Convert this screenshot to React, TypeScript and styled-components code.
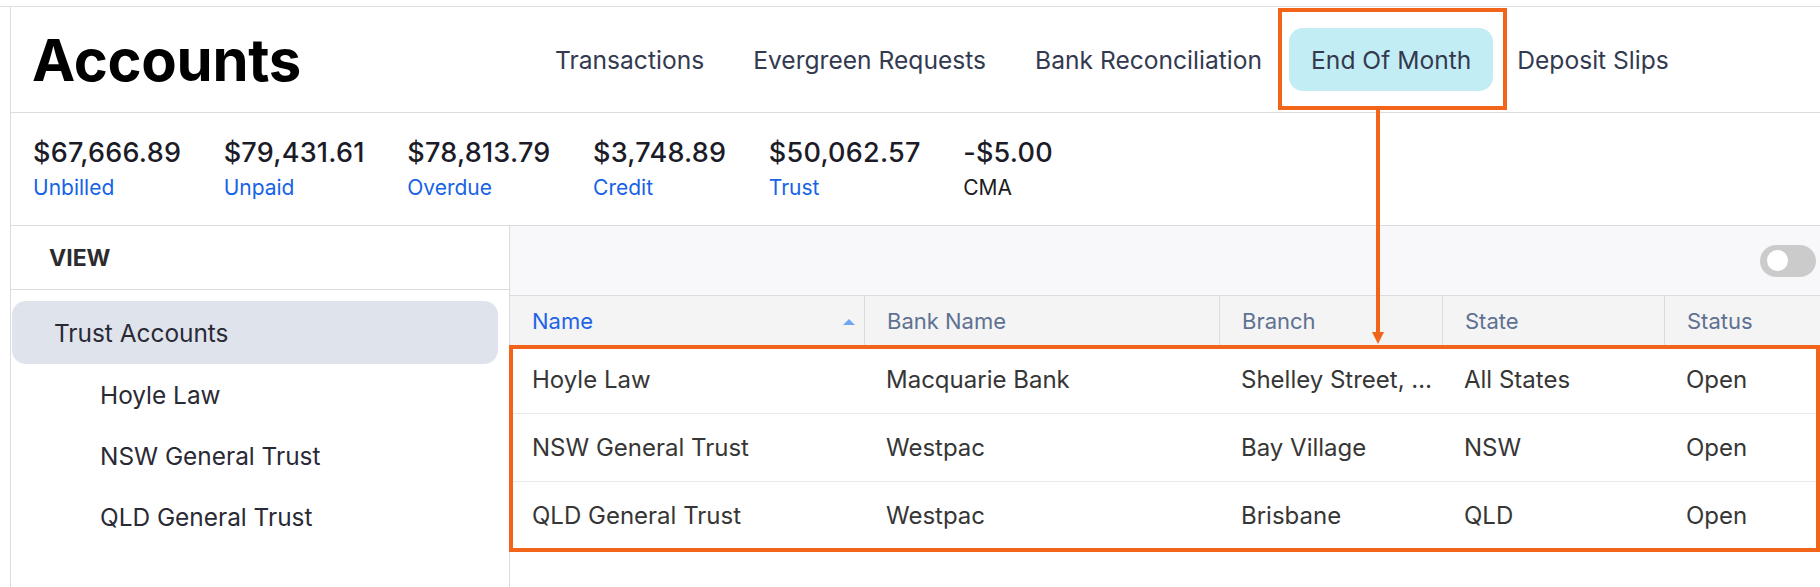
import styled, { createGlobalStyle } from "styled-components";

const GlobalStyle = createGlobalStyle`
  html, body {
    margin: 0;
    padding: 0;
    background: #ffffff;
    font-family: Inter, "Noto Sans", "Liberation Sans", sans-serif;
    overflow: hidden;
  }
  * {
    box-sizing: border-box;
  }
`;

const ORANGE = "#f2641a";

const tabs = ["Transactions", "Evergreen Requests", "Bank Reconciliation", "End Of Month", "Deposit Slips"];

const stats = [
  { amount: "$67,666.89", label: "Unbilled", link: true },
  { amount: "$79,431.61", label: "Unpaid", link: true },
  { amount: "$78,813.79", label: "Overdue", link: true },
  { amount: "$3,748.89", label: "Credit", link: true },
  { amount: "$50,062.57", label: "Trust", link: true },
  { amount: "-$5.00", label: "CMA", link: false },
];

const columns = [
  { key: "name", title: "Name", width: "354px" },
  { key: "bank", title: "Bank Name", width: "355px" },
  { key: "branch", title: "Branch", width: "223px" },
  { key: "state", title: "State", width: "222px" },
  { key: "status", title: "Status", width: "1fr" },
];

const rows = [
  { name: "Hoyle Law", bank: "Macquarie Bank", branch: "Shelley Street, Sydney", state: "All States", status: "Open" },
  { name: "NSW General Trust", bank: "Westpac", branch: "Bay Village", state: "NSW", status: "Open" },
  { name: "QLD General Trust", bank: "Westpac", branch: "Brisbane", state: "QLD", status: "Open" },
];

const gridColumns = columns.map((c) => c.width).join(" ");

export default function App() {
  return (
    <>
      <GlobalStyle />
      <Shell>
        <Frame>
          <Header>
            <Title>Accounts</Title>
            <Tabs>
              {tabs.map((tab) =>
                tab === "End Of Month" ? (
                  <Highlight key={tab}>
                    <Tab $active>{tab}</Tab>
                    <Arrow width="12" height="234" viewBox="0 0 12 234">
                      <line x1="6" y1="0" x2="6" y2="224" stroke={ORANGE} strokeWidth="4" />
                      <polygon points="0,222 12,222 6,234" fill={ORANGE} />
                    </Arrow>
                  </Highlight>
                ) : (
                  <Tab key={tab}>{tab}</Tab>
                )
              )}
            </Tabs>
          </Header>

          <Stats>
            {stats.map((s) => (
              <Stat key={s.label}>
                <Amount>{s.amount}</Amount>
                <StatLabel $link={s.link}>{s.label}</StatLabel>
              </Stat>
            ))}
          </Stats>

          <Main>
            <Sidebar>
              <SidebarHeader>VIEW</SidebarHeader>
              <NavList>
                <NavItem $active>Trust Accounts</NavItem>
                <NavItem $child>Hoyle Law</NavItem>
                <NavItem $child>NSW General Trust</NavItem>
                <NavItem $child>QLD General Trust</NavItem>
              </NavList>
            </Sidebar>

            <Panel>
              <Toolbar>
                <Toggle>
                  <Knob />
                </Toggle>
              </Toolbar>
              <HeadRow>
                {columns.map((c, i) => (
                  <HeadCell key={c.key} $first={i === 0} $sorted={c.key === "name"}>
                    {c.title}
                    {c.key === "name" && <SortUp />}
                  </HeadCell>
                ))}
              </HeadRow>
              <Body>
                {rows.map((r) => (
                  <Row key={r.name}>
                    {columns.map((c) => (
                      <Cell key={c.key}>{r[c.key as keyof typeof r]}</Cell>
                    ))}
                  </Row>
                ))}
                <BodyOutline />
              </Body>
            </Panel>
          </Main>
        </Frame>
      </Shell>
    </>
  );
}

const Shell = styled.div`
  width: 1820px;
  height: 587px;
  padding-top: 6px;
  overflow: hidden;
`;

const Frame = styled.div`
  border-top: 1px solid #dfe0e6;
  height: 100%;
  padding-left: 10px;
  & > * {
    border-left: 1px solid #dcdcdf;
  }
`;

const Header = styled.header`
  display: grid;
  grid-template-columns: 499px 1fr;
  align-items: center;
  height: 106px;
  border-bottom: 1px solid #dcdcdf;
`;

const Title = styled.h1`
  margin: 0;
  padding-left: 21px;
  font-size: 58px;
  line-height: 68px;
  font-weight: 700;
  color: #000000;
  letter-spacing: -0.3px;
`;

const Tabs = styled.nav`
  display: flex;
  align-items: center;
  gap: 5px;
  padding-left: 23px;
`;

const Tab = styled.div<{ $active?: boolean }>`
  display: flex;
  align-items: center;
  height: 63px;
  padding: 0 22px;
  border-radius: 14px;
  font-size: 24.6px;
  color: #333a4f;
  white-space: nowrap;
  background: ${({ $active }) => ($active ? "#c3edf4" : "transparent")};
`;

const Highlight = styled.div`
  position: relative;
  z-index: 10;
  margin-right: -3px;

  &::before {
    content: "";
    position: absolute;
    inset: -20px -14px -19px -11px;
    border: 4px solid ${ORANGE};
    pointer-events: none;
  }
`;

const Arrow = styled.svg`
  position: absolute;
  left: 83px;
  top: 82px;
  display: block;
`;

const Stats = styled.section`
  display: flex;
  gap: 42.5px;
  height: 113px;
  padding: 23px 0 0 22px;
  border-bottom: 1px solid #dcdcdf;
`;

const Stat = styled.div`
  display: flex;
  flex-direction: column;
`;

const Amount = styled.span`
  font-size: 27px;
  line-height: 33px;
  font-weight: 500;
  letter-spacing: 0.25px;
  color: #1c1c28;
`;

const StatLabel = styled.span<{ $link: boolean }>`
  margin-top: 6px;
  font-size: 21px;
  line-height: 25px;
  color: ${({ $link }) => ($link ? "#1763e6" : "#1c1c22")};
`;

const Main = styled.div`
  display: flex;
  height: 400px;
`;

const Sidebar = styled.aside`
  width: 499px;
  flex-shrink: 0;
  border-right: 1px solid #dcdcdf;
`;

const SidebarHeader = styled.div`
  display: flex;
  align-items: center;
  height: 64px;
  padding-left: 38px;
  border-bottom: 1px solid #dcdcdf;
  font-size: 23px;
  font-weight: 700;
  color: #2b2b30;
`;

const NavList = styled.div`
  display: flex;
  flex-direction: column;
  padding: 11px 11px 0 1px;
`;

const NavItem = styled.div<{ $active?: boolean; $child?: boolean }>`
  display: flex;
  align-items: center;
  height: ${({ $active }) => ($active ? "63px" : "61px")};
  padding-left: ${({ $child }) => ($child ? "88px" : "42px")};
  border-radius: 14px;
  font-size: 24.4px;
  color: #2a2a35;
  background: ${({ $active }) => ($active ? "#dfe3ec" : "transparent")};
`;

const Panel = styled.section`
  flex: 1;
  display: flex;
  flex-direction: column;
  min-width: 0;
`;

const Toolbar = styled.div`
  display: flex;
  align-items: center;
  justify-content: flex-end;
  height: 70px;
  padding-right: 4px;
  background: #f8f8fa;
  border-bottom: 1px solid #dcdcdf;
`;

const Toggle = styled.div`
  width: 56px;
  height: 32px;
  border-radius: 16px;
  background: #cbcbcb;
  display: flex;
  align-items: center;
  padding-left: 7px;
`;

const Knob = styled.span`
  width: 21px;
  height: 21px;
  border-radius: 50%;
  background: #ffffff;
`;

const HeadRow = styled.div`
  display: grid;
  grid-template-columns: ${gridColumns};
  height: 50px;
  background: #f4f4f5;
`;

const HeadCell = styled.div<{ $first: boolean; $sorted: boolean }>`
  display: flex;
  align-items: center;
  justify-content: space-between;
  padding: 0 9px 0 22px;
  font-size: 22px;
  color: ${({ $sorted }) => ($sorted ? "#1f63e6" : "#5f7191")};
  border-left: ${({ $first }) => ($first ? "none" : "1px solid #dcdcdf")};
  white-space: nowrap;
`;

const SortUp = styled.span`
  width: 0;
  height: 0;
  border-left: 6px solid transparent;
  border-right: 6px solid transparent;
  border-bottom: 6px solid #6ea8f2;
  margin-top: 2px;
`;

const Body = styled.div`
  position: relative;
`;

const Row = styled.div`
  display: grid;
  grid-template-columns: ${gridColumns};
  height: 68px;
  border-bottom: 1px solid #e9e9eb;
  background: #ffffff;
`;

const Cell = styled.div`
  display: block;
  min-width: 0;
  padding: 0 4px 0 22px;
  font-size: 24px;
  line-height: 67px;
  color: #363636;
  overflow: hidden;
  white-space: nowrap;
  text-overflow: ellipsis;
`;

const BodyOutline = styled.div`
  position: absolute;
  inset: -1px 0 -2px -1px;
  border: 4px solid ${ORANGE};
  pointer-events: none;
`;
